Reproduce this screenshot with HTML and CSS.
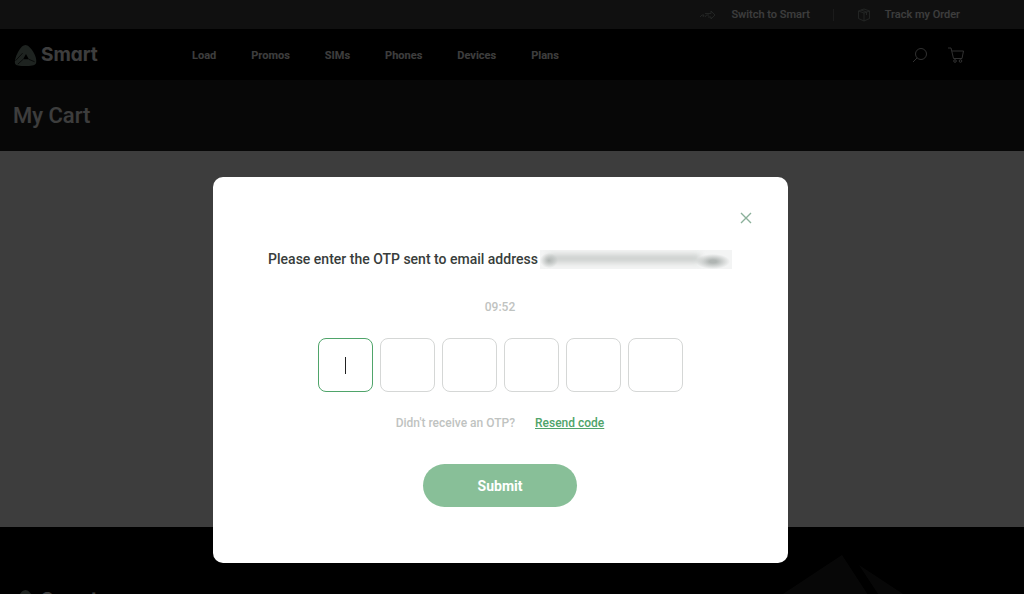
FILE: index.html
```html
<!DOCTYPE html>
<html lang="en">
<head>
    <meta charset="UTF-8">
    <meta name="viewport" content="width=device-width, initial-scale=1.0">
    <title>My Cart | Smart</title>
    <link rel="stylesheet" href="styles.css">
</head>
<body>
    <svg width="0" height="0" class="sprite">
        <symbol id="mark" viewBox="0 0 24 24">
            <path fill-rule="evenodd" d="M12 1C14.500 1 17.500 4 20 8C22.500 12 24 17 23 20C22 22.500 17 23 12 23C6 23 1.500 22.500 1 20C.5 17 2.500 11 5 7C7 3.500 9.500 1 12 1ZM12.500 10.500L9.500 16H15.500Z"/>
            <path class="cut" d="M1.500 17.500L9 9.500M9.500 16L4 21M15.500 16L21.500 18.500"/>
        </symbol>
    </svg>

    <div class="top-bar">
        <a href="#">
            <svg class="switch-icon" viewBox="0 0 18 12">
                <path d="M6 4.500h6V2l4 4-4 4V8H9M1 8l2-2h2L4 8M6 8l1.500-2H10"/>
            </svg>
            Switch to Smart
        </a>
        <span class="divider"></span>
        <a href="#">
            <svg class="track-icon" viewBox="0 0 14 14">
                <path d="M7 1l5.500 2v7.500L7 13l-5.500-2.500V3zM1.500 3L7 5l5.500-2M7 5v8M4 2l5.500 2v3"/>
            </svg>
            Track my Order
        </a>
    </div>

    <header class="header">
        <a href="#" class="logo">
            <svg class="logo-mark"><use href="#mark"/></svg>
            <span>Smart</span>
        </a>
        <nav class="nav">
            <a href="#">Load</a>
            <a href="#">Promos</a>
            <a href="#">SIMs</a>
            <a href="#">Phones</a>
            <a href="#">Devices</a>
            <a href="#">Plans</a>
        </nav>
        <div class="header-icons">
            <a href="#" aria-label="Search">
                <svg viewBox="0 0 16 16">
                    <circle cx="9" cy="7" r="5.500"/>
                    <path d="M5 11l-4 4"/>
                </svg>
            </a>
            <a href="#" aria-label="Cart">
                <svg viewBox="0 0 16 16">
                    <path d="M0 1h3l2.500 10.500H14L15.500 4H4"/>
                    <circle cx="7" cy="14" r="1.300"/>
                    <circle cx="12.500" cy="14" r="1.300"/>
                </svg>
            </a>
        </div>
    </header>

    <div class="page-title">
        <h1>My Cart</h1>
    </div>

    <main class="content"></main>

    <footer class="footer">
        <a href="#" class="logo">
            <svg class="logo-mark"><use href="#mark"/></svg>
            <span>Smart</span>
        </a>
        <svg class="footer-shape" viewBox="0 0 120 60">
            <path d="M0 39L59 0L98 60H0ZM76 10L120 39V60H109Z"/>
        </svg>
    </footer>

    <div class="overlay">
        <form class="modal" role="dialog" aria-labelledby="otpTitle">
            <button type="button" class="close" aria-label="Close">
                <svg viewBox="0 0 12 12"><path d="M1 1l10 10M11 1L1 11"/></svg>
            </button>
            <h2 id="otpTitle">Please enter the OTP sent to email address <span class="masked-email"></span></h2>
            <p class="timer">09:52</p>
            <div class="otp">
                <input type="text" class="active" maxlength="1" inputmode="numeric" aria-label="Digit 1">
                <input type="text" maxlength="1" inputmode="numeric" aria-label="Digit 2">
                <input type="text" maxlength="1" inputmode="numeric" aria-label="Digit 3">
                <input type="text" maxlength="1" inputmode="numeric" aria-label="Digit 4">
                <input type="text" maxlength="1" inputmode="numeric" aria-label="Digit 5">
                <input type="text" maxlength="1" inputmode="numeric" aria-label="Digit 6">
            </div>
            <div class="resend">
                <span>Didn't receive an OTP?</span>
                <a href="#">Resend code</a>
            </div>
            <button type="submit" class="submit">Submit</button>
        </form>
    </div>
</body>
</html>
```
FILE: styles.css
```css
:root {
    --green: #4fa46a;
    --green-light: #88bf98;
    --text-color: #383d3b;
    --muted: #bfc3c1;
    --border-color: #d5d7d6;
}

* {
    margin: 0;
    padding: 0;
    box-sizing: border-box;
}

body {
    font-family: Roboto, Arial, sans-serif;
    background: #fff;
    color: #fff;
    min-height: 100vh;
    display: flex;
    flex-direction: column;
    overflow: hidden;
}

a {
    color: inherit;
    text-decoration: none;
}

svg {
    fill: none;
    stroke: currentColor;
}

.sprite {
    position: absolute;
}

.top-bar {
    background: #464646;
    height: 29px;
    padding-right: 64px;
    display: flex;
    align-items: center;
    justify-content: flex-end;
    gap: 23px;
    font-size: 11px;
    font-weight: 500;
}

.top-bar a {
    display: flex;
    align-items: center;
    gap: 14px;
}

.top-bar svg {
    stroke: #a0aaa5;
    stroke-width: 0.8;
}

.switch-icon {
    width: 18px;
    height: 12px;
}

.track-icon {
    width: 14px;
    height: 14px;
}

.divider {
    width: 1px;
    height: 12px;
    background: #707070;
}

.header {
    background: #000;
    height: 51px;
    padding: 1px 60px 0 14px;
    display: flex;
    align-items: center;
}

.logo {
    display: flex;
    align-items: center;
    gap: 4px;
    font-family: Inter, sans-serif;
    font-feature-settings: "cv11";
    font-size: 19px;
    font-weight: 700;
    line-height: 24px;
}

.logo-mark {
    width: 23px;
    height: 23px;
    fill: #7c9185;
    stroke: none;
}

.cut {
    fill: none;
    stroke: #000;
    stroke-width: 0.7;
}

.header .logo {
    width: 178px;
}

.nav {
    flex: 1;
    display: flex;
    gap: 35px;
    font-size: 11px;
    font-weight: 700;
}

.header-icons {
    display: flex;
    gap: 20px;
    color: #ccc;
}

.header-icons svg {
    display: block;
    width: 16px;
    height: 16px;
}

.page-title {
    background: #212121;
    height: 71px;
    padding-left: 13px;
    display: flex;
    align-items: center;
}

h1 {
    font-size: 22px;
    font-weight: 500;
}

.content {
    height: 376px;
}

.footer {
    background: #000;
    flex: 1;
    padding: 61px 14px 24px;
    display: flex;
    position: relative;
}

.footer-shape {
    position: absolute;
    right: 121px;
    top: 28px;
    width: 120px;
    height: 60px;
    fill: #212121;
    stroke: none;
}

.overlay {
    position: fixed;
    inset: 0;
    background: rgba(0, 0, 0, 0.76);
    padding: 146px 24px 0 0;
    display: flex;
    align-items: center;
    justify-content: center;
}

.modal {
    background: #fff;
    color: var(--text-color);
    width: 575px;
    border-radius: 10px;
    padding: 35px 36px 56px;
    display: flex;
    flex-direction: column;
    align-items: center;
}

button {
    border: none;
    cursor: pointer;
    font-family: inherit;
}

.close {
    align-self: flex-end;
    background: none;
    color: #8bb09a;
    width: 12px;
    height: 12px;
}

.close svg {
    display: block;
    width: 12px;
    height: 12px;
    stroke-width: 1.4;
}

h2 {
    margin-top: 25px;
    display: flex;
    align-items: center;
    gap: 2px;
    font-size: 14px;
    font-weight: 500;
    line-height: 20px;
}

.masked-email {
    position: relative;
    width: 192px;
    height: 19px;
    background: #f3f4f4;
    overflow: hidden;
}

.masked-email::before {
    content: "";
    position: absolute;
    inset: 5px 32px 7px 8px;
    background: #c4c8c6;
    filter: blur(3px);
}

.masked-email::after {
    content: "";
    position: absolute;
    inset: 0;
    background:
        radial-gradient(closest-side, #b0b5b3, transparent) 0 3px / 18px 15px no-repeat,
        radial-gradient(closest-side, #b0b5b3 20%, transparent) 156px 4px / 34px 15px no-repeat;
}

.timer {
    margin-top: 28px;
    color: var(--muted);
    font-size: 12px;
    font-weight: 500;
    line-height: 20px;
}

.otp {
    margin-top: 21px;
    display: flex;
    gap: 7px;
}

.otp input {
    width: 55px;
    height: 54px;
    border: 1px solid var(--border-color);
    border-radius: 8px;
    text-align: center;
    font-size: 16px;
    outline: none;
}

.otp .active {
    border-color: var(--green);
    background: linear-gradient(#222, #222) center / 1px 17px no-repeat;
}

.resend {
    margin-top: 21px;
    display: flex;
    gap: 20px;
    color: var(--muted);
    font-size: 12px;
    font-weight: 500;
    line-height: 20px;
}

.resend a {
    color: var(--green);
    text-decoration: underline;
}

.submit {
    margin-top: 31px;
    width: 154px;
    height: 43px;
    border-radius: 22px;
    background: var(--green-light);
    color: #fff;
    font-size: 14px;
    font-weight: 700;
}
```
